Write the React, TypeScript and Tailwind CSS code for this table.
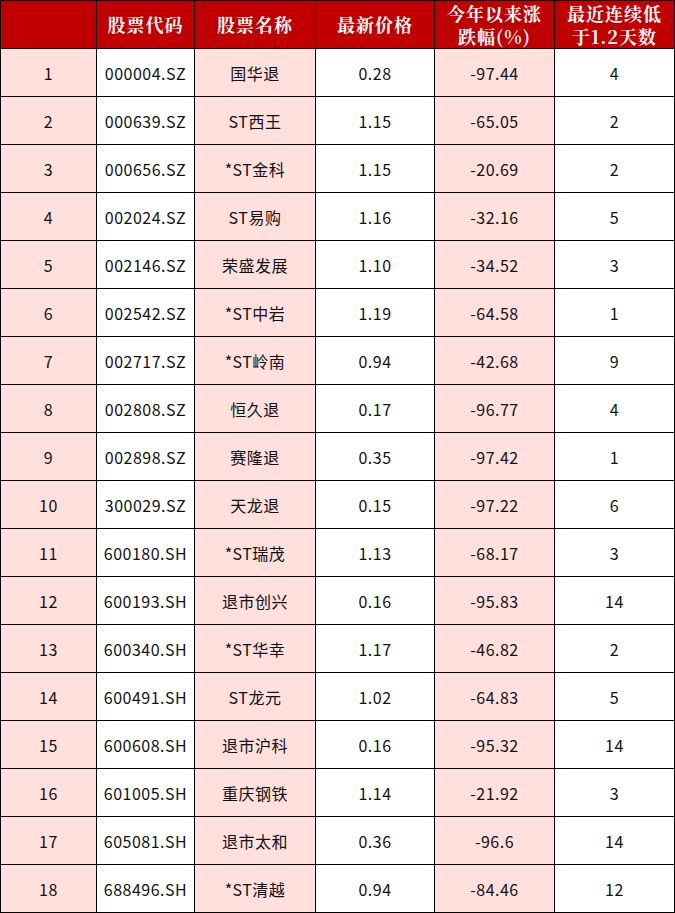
import React from 'react';

const rows: [string, string, string, string, string, string][] = [
  ['1', '000004.SZ', '国华退', '0.28', '-97.44', '4'],
  ['2', '000639.SZ', 'ST西王', '1.15', '-65.05', '2'],
  ['3', '000656.SZ', '*ST金科', '1.15', '-20.69', '2'],
  ['4', '002024.SZ', 'ST易购', '1.16', '-32.16', '5'],
  ['5', '002146.SZ', '荣盛发展', '1.10', '-34.52', '3'],
  ['6', '002542.SZ', '*ST中岩', '1.19', '-64.58', '1'],
  ['7', '002717.SZ', '*ST岭南', '0.94', '-42.68', '9'],
  ['8', '002808.SZ', '恒久退', '0.17', '-96.77', '4'],
  ['9', '002898.SZ', '赛隆退', '0.35', '-97.42', '1'],
  ['10', '300029.SZ', '天龙退', '0.15', '-97.22', '6'],
  ['11', '600180.SH', '*ST瑞茂', '1.13', '-68.17', '3'],
  ['12', '600193.SH', '退市创兴', '0.16', '-95.83', '14'],
  ['13', '600340.SH', '*ST华幸', '1.17', '-46.82', '2'],
  ['14', '600491.SH', 'ST龙元', '1.02', '-64.83', '5'],
  ['15', '600608.SH', '退市沪科', '0.16', '-95.32', '14'],
  ['16', '601005.SH', '重庆钢铁', '1.14', '-21.92', '3'],
  ['17', '605081.SH', '退市太和', '0.36', '-96.6', '14'],
  ['18', '688496.SH', '*ST清越', '0.94', '-84.46', '12'],
];

const headers = ['', '股票代码', '股票名称', '最新价格', '今年以来涨\n跌幅(%)', '最近连续低\n于1.2天数'];

export default function App() {
  return (
    <div className="w-[675px] h-[913px] bg-white">
      <div className="grid grid-cols-[95px_97px_120px_118px_119px_119px] auto-rows-[47px] gap-px p-px bg-black w-[675px]">
        {headers.map((h, i) => (
          <div
            key={`h${i}`}
            className="bg-[#c00000] text-white font-bold text-[18px] leading-[23px] tracking-[1px] flex items-center justify-center text-center whitespace-pre-line font-['Noto_Serif_CJK_SC','Noto_Sans_CJK_SC',serif]"
          >
            {h}
          </div>
        ))}
        {rows.map((r, ri) =>
          r.map((c, ci) => (
            <div
              key={`${ri}-${ci}`}
              className={`${ci % 2 === 0 ? 'bg-[#ffe0dd]' : 'bg-white'} text-[#111] text-[16px] tracking-[0.5px] flex items-center justify-center font-['Noto_Sans_CJK_SC',sans-serif]`}
            >
              {c}
            </div>
          ))
        )}
      </div>
    </div>
  );
}
